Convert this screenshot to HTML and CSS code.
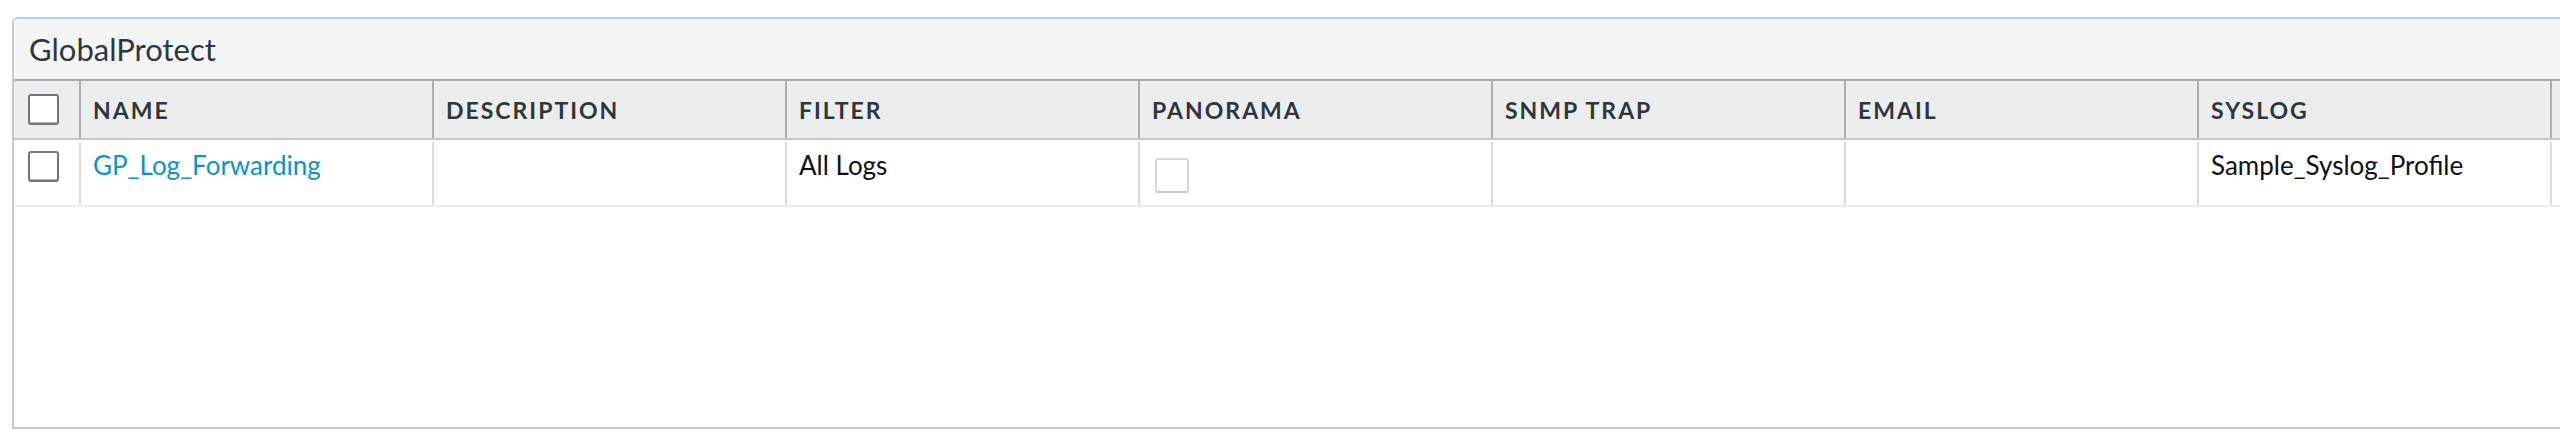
FILE: index.html
```html
<!DOCTYPE html>
<html>
<head>
<meta charset="utf-8">
<link rel="stylesheet" href="styles.css">
</head>
<body>
<div class="panel">
  <div class="panel-title">GlobalProtect</div>
  <div class="grid head">
    <div class="cell cb-cell"><span class="cb"></span></div>
    <div class="cell">NAME</div>
    <div class="cell">DESCRIPTION</div>
    <div class="cell">FILTER</div>
    <div class="cell">PANORAMA</div>
    <div class="cell">SNMP TRAP</div>
    <div class="cell">EMAIL</div>
    <div class="cell">SYSLOG</div>
    <div class="cell last"></div>
  </div>
  <div class="grid data">
    <div class="cell cb-cell"><span class="cb"></span></div>
    <div class="cell"><a class="link">GP_Log_Forwarding</a></div>
    <div class="cell"></div>
    <div class="cell">All Logs</div>
    <div class="cell"><span class="cb-dis"></span></div>
    <div class="cell"></div>
    <div class="cell"></div>
    <div class="cell">Sample_Syslog_Profile</div>
    <div class="cell last"></div>
  </div>
</div>
</body>
</html>
```

FILE: styles.css
```css
html, body {
  margin: 0;
  padding: 0;
  background: #ffffff;
  font-family: Lato, "Open Sans", Arial, sans-serif;
  overflow: hidden;
}

.panel {
  margin: 17px 0 0 12px;
  height: 412px;
  box-sizing: border-box;
  border-top: 2px solid #bccfd7;
  border-left: 2px solid #c6cacd;
  border-bottom: 2px solid #c6cacd;
  border-top-left-radius: 6px;
  background: #ffffff;
}

.panel-title {
  height: 60px;
  line-height: 60px;
  padding-left: 15px;
  background: #f4f6f6;
  border-top-left-radius: 5px;
  font-size: 31px;
  color: #30373c;
}

.grid {
  display: grid;
  grid-template-columns: 67px repeat(7, 353px) 1fr;
}

.cell {
  box-sizing: border-box;
  border-right: 2px solid #dcdcdc;
}

.cell.last {
  border-right: none;
}

.head {
  height: 61px;
  box-sizing: border-box;
  border-top: 2px solid #a8adb1;
  border-bottom: 2px solid #c4c8cb;
  background: #eceeee;
}

.head .cell {
  border-right-color: #a9aeb1;
  display: flex;
  align-items: center;
  padding-left: 12px;
  font-size: 23px;
  font-weight: 700;
  letter-spacing: 2px;
  color: #30373c;
}

.data {
  height: 67px;
  box-sizing: border-box;
  padding-top: 2px;
  border-bottom: 2px solid #ebebeb;
}

.data .cell {
  padding: 7px 0 0 12px;
  font-size: 26px;
  line-height: 32px;
  color: #111111;
}

.head .cb-cell,
.data .cb-cell {
  padding-left: 14px;
}

.data .cb-cell {
  padding-top: 9px;
}

.cb {
  display: block;
  width: 31px;
  height: 31px;
  box-sizing: border-box;
  border: 2px solid #72767a;
  border-radius: 3px;
  background: #ffffff;
  box-shadow: inset 0 -1px 0 #b5b8bb;
}

.cb-dis {
  display: block;
  margin: 9px 0 0 3px;
  width: 34px;
  height: 35px;
  box-sizing: border-box;
  border: 2px solid #d6d9db;
  border-bottom-color: #c5c8ca;
  border-radius: 3px;
  background: #ffffff;
}

.link {
  color: #0a92d2;
  text-decoration: none;
}
```
